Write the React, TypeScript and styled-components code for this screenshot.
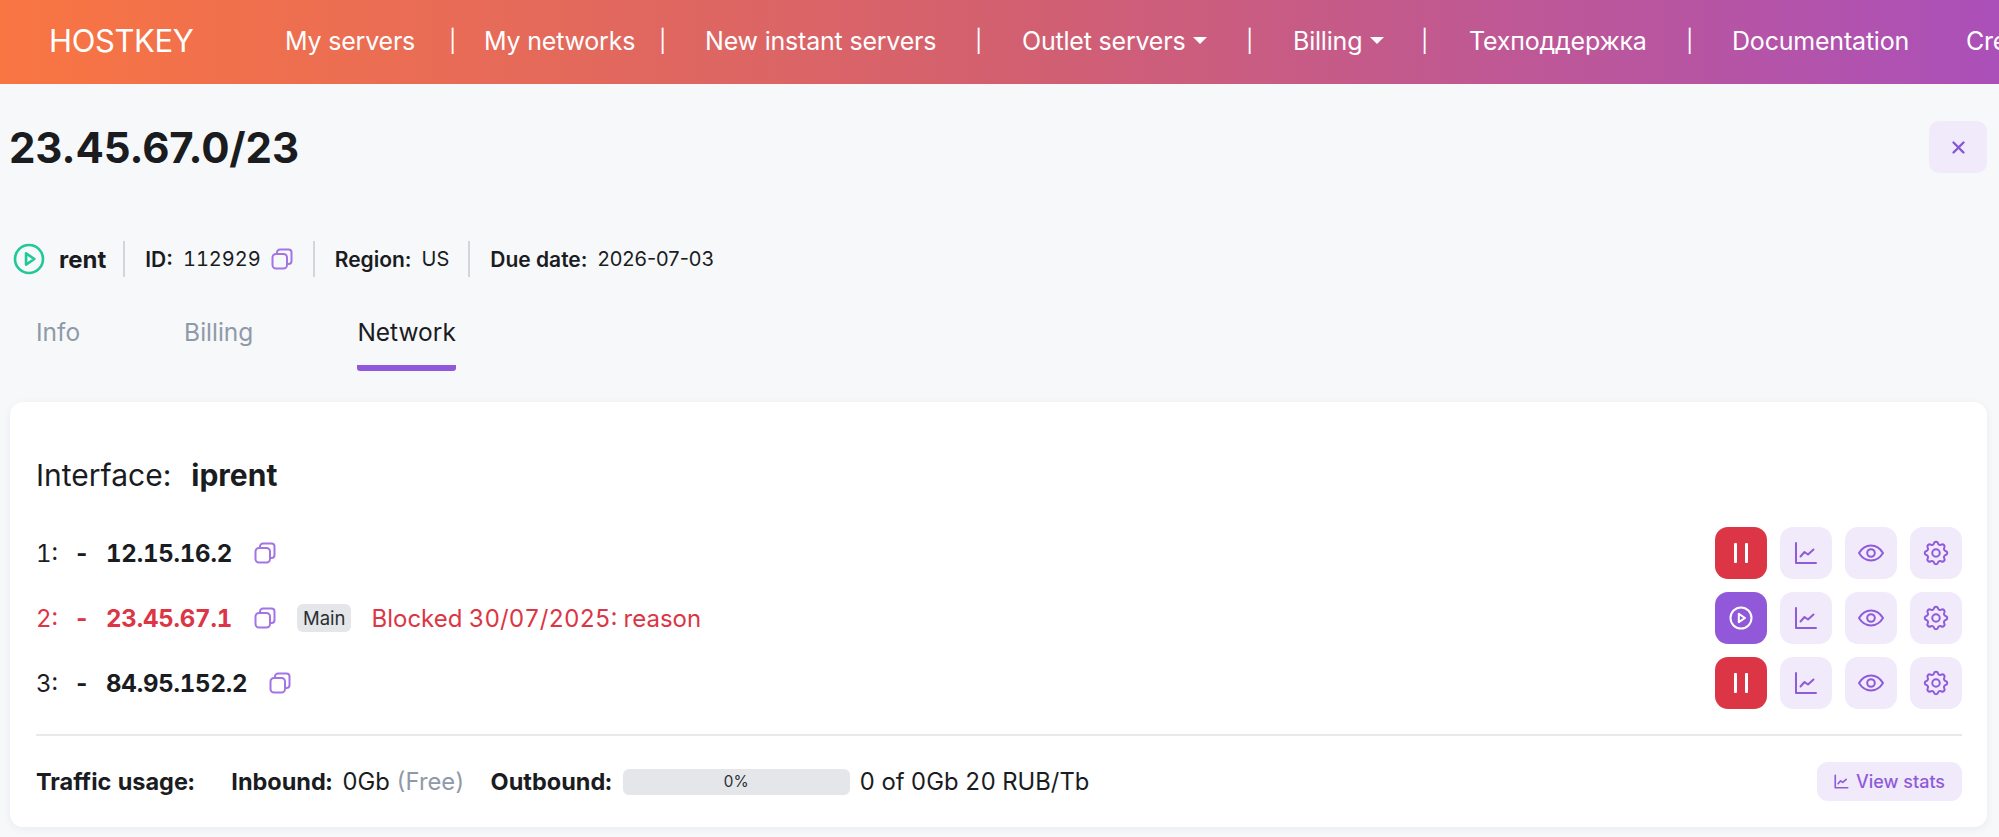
import React from "react";
import styled, { createGlobalStyle } from "styled-components";

const GlobalStyle = createGlobalStyle`
  html, body {
    margin: 0;
    padding: 0;
    background: #f7f8fa;
    overflow: hidden;
  }
  body {
    font-family: Inter, "Noto Sans", sans-serif;
    color: #1a1c1f;
  }
`;

const Page = styled.div`
  width: 1999px;
  height: 837px;
  overflow: hidden;
`;

const NavBar = styled.nav`
  display: flex;
  align-items: center;
  height: 84px;
  padding: 0 0 3px 49px;
  background: linear-gradient(90deg, #f97542 0%, #d3606f 50%, #ab50b9 100%);
  color: #fff;
  white-space: nowrap;
  overflow: hidden;
  box-sizing: border-box;
`;

const Brand = styled.div`
  width: 236px;
  flex: none;
  font-size: 31px;
  letter-spacing: -0.4px;
`;

const NavItem = styled.div<{ $w: number }>`
  width: ${(p) => p.$w}px;
  flex: none;
  display: flex;
  align-items: center;
  gap: 8px;
  font-size: 25px;
  letter-spacing: -0.2px;
`;

const NavSep = styled.div<{ $w: number }>`
  width: ${(p) => p.$w}px;
  flex: none;
  font-size: 22px;
`;

const Caret = styled.span`
  width: 0;
  height: 0;
  border-left: 7px solid transparent;
  border-right: 7px solid transparent;
  border-top: 7px solid #fff;
`;

const Main = styled.main`
  padding: 0 12px 0 10px;
`;

const TitleRow = styled.div`
  display: flex;
  justify-content: space-between;
  align-items: flex-start;
  padding-top: 37px;
  height: 100px;
`;

const Title = styled.h1`
  margin: 0 0 0 -1px;
  font-size: 42px;
  line-height: 54px;
  font-weight: 700;
  letter-spacing: -0.1px;
`;

const CloseButton = styled.button`
  width: 58px;
  height: 52px;
  border: none;
  border-radius: 10px;
  background: #f1eafb;
  color: #8658d6;
  display: flex;
  align-items: center;
  justify-content: center;
  padding: 0;
`;

const StatusRow = styled.div`
  display: flex;
  align-items: center;
  height: 38px;
  margin-top: 19px;
  font-size: 20px;
`;

const StatusPart = styled.div<{ $pad?: number }>`
  display: flex;
  align-items: center;
  height: 36px;
  padding: 0 ${(p) => p.$pad ?? 19}px 0 20px;
  gap: 10px;
  border-right: 2px solid #d2d6db;
  &:first-child {
    padding-left: 3px;
    gap: 14px;
  }
  &:last-child {
    border-right: none;
  }
`;

const Strong = styled.b`
  font-size: 21px;
  font-weight: 600;
`;

const TabularValue = styled.span`
  font-variant-numeric: tabular-nums;
`;

const RentLabel = styled.b`
  font-size: 24px;
  font-weight: 700;
`;

const TabBar = styled.div`
  display: flex;
  margin-top: 34px;
  padding-left: 26px;
  gap: 104px;
`;

const Tab = styled.div<{ $active?: boolean }>`
  font-size: 24.5px;
  line-height: 34px;
  padding-top: 3px;
  height: 50px;
  color: ${(p) => (p.$active ? "#1a1c1f" : "#8f9aa8")};
  border-bottom: ${(p) => (p.$active ? "6px solid #9159d9" : "6px solid transparent")};
  border-radius: 3px;
`;

const Card = styled.section`
  margin-top: 31px;
  width: 1977px;
  height: 425px;
  box-sizing: border-box;
  background: #fff;
  border-radius: 13px;
  box-shadow: 0 2px 8px rgba(30, 40, 60, 0.06);
  padding: 51px 25px 0 26px;
`;

const InterfaceLine = styled.div`
  display: flex;
  align-items: baseline;
  gap: 20px;
  font-size: 30px;
  line-height: 44px;
  b {
    font-weight: 700;
  }
`;

const Rows = styled.div`
  display: flex;
  flex-direction: column;
  gap: 13px;
  margin-top: 30px;
`;

const Row = styled.div<{ $blocked?: boolean }>`
  display: flex;
  align-items: center;
  height: 52px;
  font-size: 24px;
  font-variant-numeric: tabular-nums;
  color: ${(p) => (p.$blocked ? "#dc3545" : "#1a1c1f")};
`;

const RowIndex = styled.span`
  width: 38px;
`;

const RowDash = styled.b`
  width: 32px;
  font-weight: 700;
`;

const RowIp = styled.b`
  font-weight: 700;
  letter-spacing: -0.2px;
  margin-right: 22px;
`;

const Badge = styled.span`
  margin-left: 21px;
  background: #e4e6e9;
  color: #2b2f34;
  font-size: 18.5px;
  padding: 3px 6px;
  border-radius: 6px;
  line-height: 22px;
`;

const BlockedNote = styled.span`
  margin-left: 20px;
`;

const Actions = styled.div`
  display: flex;
  gap: 13px;
  margin-left: auto;
`;

const IconButton = styled.button<{ $tone?: "danger" | "primary" }>`
  width: 52px;
  height: 52px;
  padding: 0;
  border: none;
  border-radius: 13px;
  display: flex;
  align-items: center;
  justify-content: center;
  color: ${(p) => (p.$tone ? "#fff" : "#8f5bd9")};
  background: ${(p) =>
    p.$tone === "danger" ? "#dc3545" : p.$tone === "primary" ? "#9159d9" : "#f1eafb"};
`;

const Divider = styled.hr`
  border: none;
  border-top: 2px solid #e8e9eb;
  margin: 25px 0 0;
`;

const TrafficRow = styled.div`
  display: flex;
  align-items: center;
  height: 39px;
  margin-top: 26px;
  font-size: 23.8px;
  font-variant-numeric: tabular-nums;
  white-space: nowrap;
`;

const Bold = styled.b`
  font-size: 23.5px;
  font-weight: 700;
`;

const Muted = styled.span`
  color: #8f9aa8;
`;

const Progress = styled.div`
  width: 227px;
  height: 26px;
  margin: 0 10px 0 11px;
  border-radius: 6px;
  background: #e4e6e9;
  color: #2b2f34;
  font-size: 15.5px;
  display: flex;
  align-items: center;
  justify-content: center;
`;

const ViewStats = styled.button`
  margin-left: auto;
  width: 145px;
  height: 39px;
  border: none;
  border-radius: 11px;
  background: #f1eafb;
  color: #8f5bd9;
  font: 500 18px Inter, sans-serif;
  display: flex;
  align-items: center;
  justify-content: center;
  gap: 7px;
  padding: 0;
`;

const Gap = styled.span<{ $w: number }>`
  display: inline-block;
  width: ${(p) => p.$w}px;
  flex: none;
`;

const CopyIcon = ({ size = 22 }: { size?: number }) => (
  <svg width={size} height={size} viewBox="0 0 22 22" fill="none" stroke="#a274e4" strokeWidth="2">
    <rect x="1.5" y="6" width="14.5" height="14.5" rx="3.5" />
    <path d="M6 6V4.5a3 3 0 0 1 3-3h8.5a3 3 0 0 1 3 3V13a3 3 0 0 1-3 3H16" />
  </svg>
);

const PlayCircle = ({ size, color, width }: { size: number; color: string; width: number }) => (
  <svg width={size} height={size} viewBox="0 0 24 24" fill="none" stroke={color} strokeWidth={width} strokeLinejoin="round">
    <circle cx="12" cy="12" r="10.5" />
    <path d="M9.8 7.8v8.4l6.2-4.2z" />
  </svg>
);

const ChartIcon = ({ size = 24, weight = 2 }: { size?: number; weight?: number }) => (
  <svg width={size} height={size} viewBox="0 0 24 24" fill="none" stroke="currentColor" strokeWidth={weight} strokeLinecap="round" strokeLinejoin="round">
    <path d="M2 2v20h20" />
    <path d="M6.5 15.5l4-4.5 3.5 2.5 5.5-5" />
  </svg>
);

const EyeIcon = () => (
  <svg width="26" height="26" viewBox="0 0 26 26" fill="none" stroke="currentColor" strokeWidth="2" strokeLinejoin="round">
    <path d="M1 13C4.200 7.800 8.200 5.500 13 5.500S21.800 7.800 25 13C21.800 18.200 17.800 20.500 13 20.500S4.200 18.200 1 13z" />
    <circle cx="13" cy="13" r="3.800" />
  </svg>
);

const GearIcon = () => (
  <svg width="30" height="30" viewBox="0 0 24 24" fill="none" stroke="currentColor" strokeWidth="1.600" strokeLinecap="round" strokeLinejoin="round">
    <path d="M10.325 4.317c.426-1.756 2.924-1.756 3.35 0a1.724 1.724 0 0 0 2.573 1.066c1.543-.94 3.31.826 2.37 2.37a1.724 1.724 0 0 0 1.065 2.572c1.756.426 1.756 2.924 0 3.35a1.724 1.724 0 0 0-1.066 2.573c.94 1.543-.826 3.31-2.37 2.370a1.724 1.724 0 0 0-2.572 1.065c-.426 1.756-2.924 1.756-3.35 0a1.724 1.724 0 0 0-2.573-1.066c-1.543.94-3.310-.826-2.370-2.370a1.724 1.724 0 0 0-1.065-2.572c-1.756-.426-1.756-2.924 0-3.350a1.724 1.724 0 0 0 1.066-2.573c-.94-1.543.826-3.310 2.370-2.370 1 .608 2.296.07 2.572-1.065z" />
    <circle cx="12" cy="12" r="3" />
  </svg>
);

const PauseIcon = () => (
  <svg width="24" height="24" viewBox="0 0 24 24" fill="#fff">
    <rect x="5" y="2" width="3" height="20" rx="1" />
    <rect x="16" y="2" width="3" height="20" rx="1" />
  </svg>
);

const CloseIcon = () => (
  <svg width="15" height="15" viewBox="0 0 15 15" stroke="currentColor" strokeWidth="2.400" strokeLinecap="round">
    <path d="M2.500 2.500l10 10M12.500 2.500l-10 10" />
  </svg>
);

const hosts = [
  { ip: "12.15.16.2", state: "active" },
  { ip: "23.45.67.1", state: "blocked" },
  { ip: "84.95.152.2", state: "active" },
];

const App = () => {
  return (
    <Page>
      <GlobalStyle />
      <NavBar>
        <Brand>HOSTKEY</Brand>
        <NavItem $w={164}>My servers</NavItem>
        <NavSep $w={35}>|</NavSep>
        <NavItem $w={175}>My networks</NavItem>
        <NavSep $w={46}>|</NavSep>
        <NavItem $w={270}>New instant servers</NavItem>
        <NavSep $w={47}>|</NavSep>
        <NavItem $w={224}>Outlet servers<Caret /></NavItem>
        <NavSep $w={47}>|</NavSep>
        <NavItem $w={128}>Billing<Caret /></NavItem>
        <NavSep $w={48}>|</NavSep>
        <NavItem $w={217}>Техподдержка</NavItem>
        <NavSep $w={46}>|</NavSep>
        <NavItem $w={234}>Documentation</NavItem>
        <NavItem $w={100}>Create</NavItem>
      </NavBar>
      <Main>
        <TitleRow>
          <Title>23.45.67.0/23</Title>
          <CloseButton aria-label="Close"><CloseIcon /></CloseButton>
        </TitleRow>
        <StatusRow>
          <StatusPart $pad={17}>
            <PlayCircle size={32} color="#20c997" width={2} />
            <RentLabel>rent</RentLabel>
          </StatusPart>
          <StatusPart $pad={20}>
            <Strong>ID:</Strong> <TabularValue>112929</TabularValue> <CopyIcon />
          </StatusPart>
          <StatusPart>
            <Strong>Region:</Strong> US
          </StatusPart>
          <StatusPart>
            <Strong>Due date:</Strong> 2026-07-03
          </StatusPart>
        </StatusRow>
        <TabBar>
          <Tab>Info</Tab>
          <Tab>Billing</Tab>
          <Tab $active>Network</Tab>
        </TabBar>
        <Card>
          <InterfaceLine>
            Interface: <b>iprent</b>
          </InterfaceLine>
          <Rows>
            {hosts.map((host, i) => {
              const blocked = host.state === "blocked";
              return (
                <Row key={host.ip} $blocked={blocked}>
                  <RowIndex>{i + 1}:</RowIndex>
                  <RowDash>-</RowDash>
                  <RowIp>{host.ip}</RowIp>
                  <CopyIcon />
                  {blocked && <Badge>Main</Badge>}
                  {blocked && <BlockedNote>Blocked 30/07/2025: reason</BlockedNote>}
                  <Actions>
                    <IconButton $tone={blocked ? "primary" : "danger"}>
                      {blocked ? <PlayCircle size={24} color="#fff" width={2} /> : <PauseIcon />}
                    </IconButton>
                    <IconButton><ChartIcon /></IconButton>
                    <IconButton><EyeIcon /></IconButton>
                    <IconButton><GearIcon /></IconButton>
                  </Actions>
                </Row>
              );
            })}
          </Rows>
          <Divider />
          <TrafficRow>
            <Bold>Traffic usage:</Bold>
            <Gap $w={37} />
            <Bold>Inbound:</Bold>
            <Gap $w={10} />
            0Gb&nbsp;<Muted>(Free)</Muted>
            <Gap $w={26} />
            <Bold>Outbound:</Bold>
            <Progress>0%</Progress>
            0 of 0Gb 20 RUB/Tb
            <ViewStats><ChartIcon size={15} weight={2.6} /> View stats</ViewStats>
          </TrafficRow>
        </Card>
      </Main>
    </Page>
  );
};

export default App;
